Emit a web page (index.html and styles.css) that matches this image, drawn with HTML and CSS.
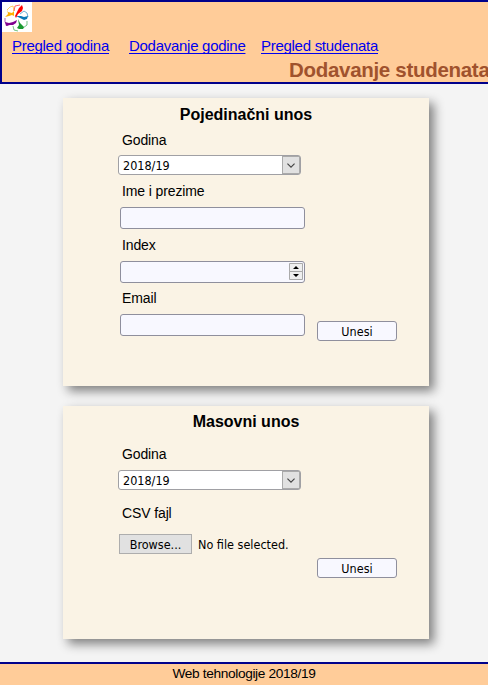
FILE: index.html
```html
<!DOCTYPE html>
<html lang="bs">
<head>
<meta charset="utf-8">
<title>Dodavanje studenata</title>
<link rel="stylesheet" href="styles.css">
</head>
<body>
<header class="header">
  <svg class="logo" viewBox="0 0 30 30">
    <rect width="30" height="30" fill="#fff"/>
    <path fill="#ffb000" d="M5 7l1 3 4 1 2-2v5l-2-1-3 1-4 1 3-3z"/>
    <path fill="none" stroke="#ffb000" stroke-width=".6" d="M5 8l3-3 3-1 1 5"/>
    <path fill="#f00" d="M17 6l3-3 1 3-1 3-4 3-2 4-1-2 2-4z"/>
    <path fill="none" stroke="#f00" stroke-width=".6" d="M12 9l1-5 5-1"/>
    <path fill="#0878b8" d="M14 14l5 0 3 1 4-1-1 3-3 1-4-2z"/>
    <path fill="none" stroke="#0878b8" stroke-width=".6" d="M18 12l4-3 3 2 1 4"/>
    <path fill="#1a9a30" d="M16 17l2 4 4 4-1 2-4 0-2-1 2-3z"/>
    <path fill="none" stroke="#1a9a30" stroke-width=".6" d="M21 26l4-3v-4M11 24l1 4 4 1"/>
    <path fill="#800090" d="M3 20l4 1 4-1 4-2-1 3-3 2-3 0-4 1z"/>
    <path fill="none" stroke="#800090" stroke-width=".6" d="M3 16v4l3 4"/>
  </svg>
  <nav class="menu">
    <a href="#">Pregled godina</a>
    <a href="#">Dodavanje godine</a>
    <a href="#">Pregled studenata</a>
  </nav>
  <h1 class="page-title">Dodavanje studenata</h1>
</header>
<main class="content">
  <form class="card single">
    <h2 class="card-title">Pojedinačni unos</h2>
    <div class="body">
      <div class="fields">
        <span class="label">Godina</span>
        <div class="select"><span>2018/19</span><i class="arrow"><svg viewBox="0 0 16 18"><path d="M4 7.500l4 4 4-4"/></svg></i></div>
        <span class="label">Ime i prezime</span>
        <div class="input"></div>
        <span class="label">Index</span>
        <div class="input"><svg class="spin" viewBox="0 0 14 18"><path fill="#efefef" stroke="#aaa" d="M.5.500h13v8H.5zM.5 8.500h13v8H.5z"/><path d="M4 6h6L7 3zM4 11h6l-3 3z"/></svg></div>
        <span class="label email">Email</span>
        <div class="input"></div>
      </div>
      <button class="submit" type="button">Unesi</button>
    </div>
  </form>
  <form class="card mass">
    <h2 class="card-title">Masovni unos</h2>
    <div class="body">
      <div class="fields">
        <span class="label">Godina</span>
        <div class="select"><span>2018/19</span><i class="arrow"><svg viewBox="0 0 16 18"><path d="M4 7.500l4 4 4-4"/></svg></i></div>
        <span class="label csv">CSV fajl</span>
        <div class="file"><span class="browse">Browse...</span><span class="status">No file selected.</span></div>
      </div>
      <button class="submit" type="button">Unesi</button>
    </div>
  </form>
</main>
<footer class="footer">Web tehnologije 2018/19</footer>
</body>
</html>
```
FILE: styles.css
```css
* { box-sizing: border-box; }
body {
  margin: 0;
  height: 685px;
  display: flex;
  flex-direction: column;
  overflow: hidden;
  background: #f4f4f4;
  color: #000;
  font-family: "Liberation Sans", Arial, sans-serif;
}
.header {
  height: 84px;
  background: #fc9;
  border: 2px solid #00008b;
  border-right: 0;
}
.logo { display: block; width: 30px; height: 30px; }
.menu {
  display: grid;
  grid-template-columns: 117px 132px auto;
  padding: 5px 0 0 10px;
  font-size: 15px;
  line-height: 18px;
  letter-spacing: -0.28px;
  white-space: nowrap;
}
.menu a { color: #0000ee; justify-self: start; text-underline-offset: 2px; text-decoration-thickness: 1px; text-decoration-skip-ink: none; }
.page-title {
  margin: 3px 0 0 287px;
  font-size: 20.500px;
  letter-spacing: -0.300px;
  line-height: 23px;
  color: #a0522d;
  white-space: nowrap;
}
.content {
  display: flex;
  flex-direction: column;
  gap: 20px;
  height: 578px;
  padding: 14px 59px 0 63px;
}
.card {
  background: #faf3e5;
  box-shadow: 5px 5px 10px #808080;
}
.single { height: 288px; }
.mass { height: 233px; }
.card-title {
  margin: 0;
  padding-top: 7px;
  font-size: 16px;
  line-height: 18px;
  text-align: center;
}
.single .card-title { padding-top: 8px; }
.body { display: flex; align-items: flex-end; padding-left: 55px; }
.fields { display: flex; flex-direction: column; width: 199px; }
.fields > * { flex-shrink: 0; }
.label { margin-left: 4px; font-size: 14px; line-height: 16px; letter-spacing: -0.120px; }
.single .fields { padding-top: 8px; height: 217px; }
.mass .fields { padding-top: 15px; height: 147px; }
.select {
  display: flex;
  justify-content: space-between;
  width: 183px;
  height: 20px;
  margin: 7px 0 8px;
  padding-left: 4px;
  border: 1px solid #a0a0a4;
  border-radius: 3px;
  background: #fff;
  font: 12.500px/19px "DejaVu Sans Condensed", "DejaVu Sans", sans-serif;
}
.mass .select { margin-top: 8px; }
.arrow { width: 18px; border: 1px solid #aaa; background: #e1e1e1; }
.arrow svg { display: block; width: 16px; height: 16px; fill: none; stroke: #444; stroke-width: 1.300; }
.input {
  display: flex;
  justify-content: flex-end;
  width: 185px;
  height: 22px;
  margin: 8px 0 8px 2px;
  padding: 1px;
  border: 1px solid #8f8f9d;
  border-radius: 3px;
  background: #f8f8ff;
}
.email { line-height: 15px; }
.spin { width: 14px; height: 18px; }
.submit {
  width: 80px;
  height: 20px;
  padding: 1px 0 0;
  border: 1px solid #8f8f9d;
  border-radius: 3px;
  background: #f8f8ff;
  color: #000;
  font: 12.500px/17px "DejaVu Sans Condensed", "DejaVu Sans", sans-serif;
}
.csv { margin-top: 7px; }
.file {
  display: flex;
  align-items: flex-start;
  gap: 6px;
  margin: 13px 0 0 1px;
  font: 12.500px/20px "DejaVu Sans Condensed", "DejaVu Sans", sans-serif;
  white-space: nowrap;
}
.browse { width: 73px; height: 20px; border: 1px solid #adadad; background: #e1e1e1; text-align: center; }
.status { padding-top: 1px; }
.footer {
  height: 23px;
  border-top: 2px solid #00008b;
  background: #fc9;
  font-size: 13.700px;
  letter-spacing: -0.360px;
  line-height: 20px;
  text-align: center;
}
```
